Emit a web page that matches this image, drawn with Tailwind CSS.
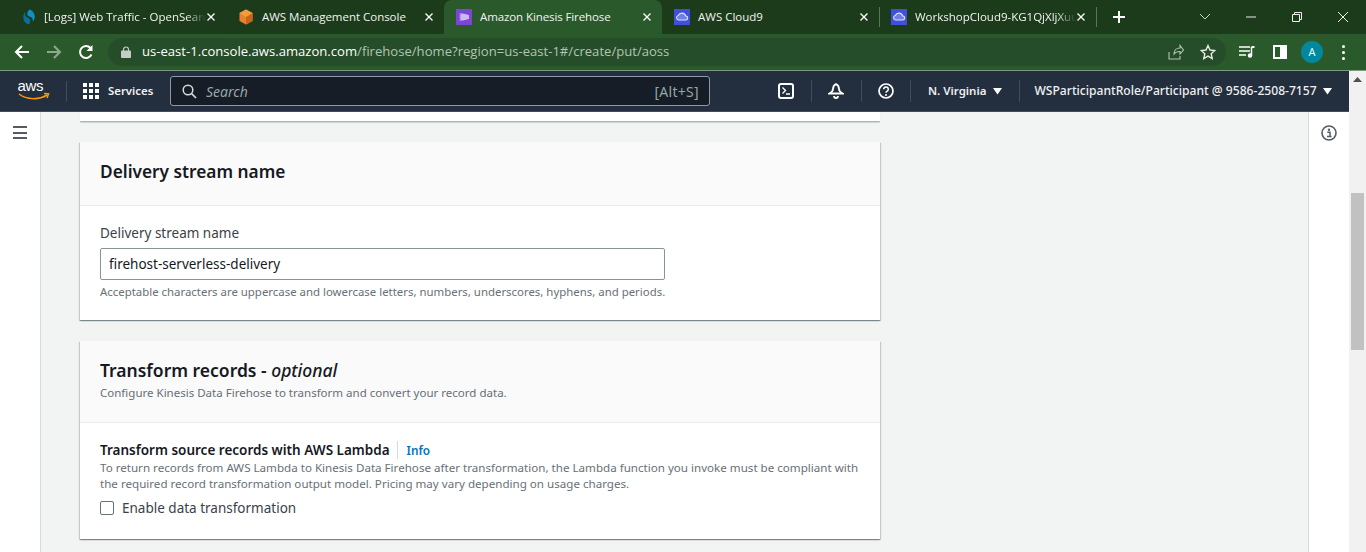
<!DOCTYPE html>
<html lang="en">
<head>
    <meta charset="UTF-8">
    <title>Amazon Kinesis Firehose</title>
    <script src="https://cdn.jsdelivr.net/npm/@tailwindcss/browser@4"></script>
</head>
<body class="h-[552px] w-[1366px] overflow-hidden bg-white font-['Open_Sans',sans-serif]">
    <!-- Tab strip -->
    <div class="flex h-[34px] items-center bg-[#1b3b1b] text-[11.5px] text-[#f1f3f1] font-['Open_Sans',sans-serif]">
        <div class="ml-[8px] flex h-[34px] w-[218px] items-center bg-[#1b3b1b] pl-[12px]">
            <svg class="mr-[8px] h-[16px] w-[16px] shrink-0" viewBox="0 0 16 16"><path d="M9.500.5a7.500 7.500 0 0 1 3 12.500C14 9.500 11 8 8.500 7 6.500 6 7 2.500 9.500.5z" fill="#0f8fc4"/><path d="M6 2.500C3.500 6 6 8 8.500 9c2 1 2.500 3.500.5 6.500A7.500 7.500 0 0 1 6 2.500z" fill="#0b6f9c"/></svg>
            <span class="w-[162px] overflow-hidden whitespace-nowrap [mask-image:linear-gradient(to_right,#000_88%,transparent)]">[Logs] Web Traffic - OpenSearch</span>
            <svg class="h-[10px] w-[10px]" viewBox="0 0 10 10"><path d="M1.500 1.500l7 7m0-7l-7 7" stroke="#fff" stroke-width="1.300"/></svg>
        </div>
        <div class="flex h-[34px] w-[218px] items-center rounded-b-lg bg-[#1b3b1b] pl-[12px]">
            <svg class="mr-[8px] h-[16px] w-[16px] shrink-0" viewBox="0 0 16 16"><path d="M8 .5l6.500 3.500v8L8 15.500 1.500 12V4z" fill="#e8832a"/><path d="M8 8v7.500L14.500 12V4z" fill="#c9641c"/><path d="M8 8L1.500 4 8 .5 14.500 4z" fill="#f19d3c"/></svg>
            <span class="w-[162px] whitespace-nowrap tracking-[-0.02px]">AWS Management Console</span>
            <svg class="h-[10px] w-[10px]" viewBox="0 0 10 10"><path d="M1.500 1.500l7 7m0-7l-7 7" stroke="#fff" stroke-width="1.300"/></svg>
        </div>
        <div class="flex h-[34px] w-[218px] items-center rounded-t-lg bg-[#2a5a2c] pl-[12px]">
            <svg class="mr-[8px] h-[16px] w-[16px] shrink-0" viewBox="0 0 16 16"><rect width="16" height="16" fill="#7b45d6"/><path d="M3 4.500h4l6 1.500v4l-6 1.500H3l2-1.500-2-1 2-1-2-1 2-1z" fill="#cdb8f2"/></svg>
            <span class="w-[162px] whitespace-nowrap tracking-[-0.1px]">Amazon Kinesis Firehose</span>
            <svg class="h-[10px] w-[10px]" viewBox="0 0 10 10"><path d="M1.500 1.500l7 7m0-7l-7 7" stroke="#fff" stroke-width="1.300"/></svg>
        </div>
        <div class="flex h-[34px] w-[218px] items-center pl-[12px]">
            <svg class="mr-[8px] h-[16px] w-[16px] shrink-0" viewBox="0 0 16 16"><rect width="16" height="16" fill="#3f51d9"/><path d="M4.500 11h7a2 2 0 0 0 .3-4A4 4 0 0 0 4.300 6.500 2.300 2.300 0 0 0 4.500 11z" fill="#6f7fe6" stroke="#dfe3fb" stroke-width="1.100"/></svg>
            <span class="w-[162px] whitespace-nowrap">AWS Cloud9</span>
            <svg class="h-[10px] w-[10px]" viewBox="0 0 10 10"><path d="M1.500 1.500l7 7m0-7l-7 7" stroke="#fff" stroke-width="1.300"/></svg>
            <span class="ml-[10px] h-[20px] w-px bg-[#5b755b]"></span>
        </div>
        <div class="flex h-[34px] w-[217px] items-center pl-[11px]">
            <svg class="mr-[8px] h-[16px] w-[16px] shrink-0" viewBox="0 0 16 16"><rect width="16" height="16" fill="#3f51d9"/><path d="M4.500 11h7a2 2 0 0 0 .3-4A4 4 0 0 0 4.300 6.500 2.300 2.300 0 0 0 4.500 11z" fill="#6f7fe6" stroke="#dfe3fb" stroke-width="1.100"/></svg>
            <span class="w-[161px] overflow-hidden whitespace-nowrap [mask-image:linear-gradient(to_right,#000_88%,transparent)]">WorkshopCloud9-KG1QjXljXuu</span>
            <svg class="h-[10px] w-[10px]" viewBox="0 0 10 10"><path d="M1.500 1.500l7 7m0-7l-7 7" stroke="#fff" stroke-width="1.300"/></svg>
            <span class="ml-[10px] h-[20px] w-px bg-[#5b755b]"></span>
        </div>
        <svg class="ml-[15px] h-[14px] w-[14px]" viewBox="0 0 14 14"><path d="M7 1v12M1 7h12" stroke="#fff" stroke-width="2"/></svg>
        <div class="ml-auto flex items-center">
            <svg class="h-[10px] w-[12px]" viewBox="0 0 12 10"><path d="M1 2l5 5 5-5" fill="none" stroke="#c9d4c9"/></svg>
            <svg class="ml-[34px] h-[10px] w-[12px]" viewBox="0 0 12 10"><path d="M1 5h10" stroke="#eee"/></svg>
            <svg class="ml-[34px] h-[12px] w-[12px]" viewBox="0 0 12 12"><path d="M1.500 3.500h7v7h-7zM3.500 3.500v-2h7v7h-2" fill="none" stroke="#eee"/></svg>
            <svg class="ml-[34px] mr-[17px] h-[12px] w-[12px]" viewBox="0 0 12 12"><path d="M1 1l10 10m0-10L1 11" stroke="#eee"/></svg>
        </div>
    </div>

    <!-- Address bar -->
    <div class="box-content flex h-[36px] items-center border-b border-[#7f9a80] bg-[#2a5a2c]">
        <svg class="ml-[14px] h-[16px] w-[16px]" viewBox="0 0 16 16"><path d="M15 8H2m6-6L2 8l6 6" fill="none" stroke="#fff" stroke-width="2"/></svg>
        <svg class="ml-[16px] h-[16px] w-[16px]" viewBox="0 0 16 16"><path d="M1 8h13M8 2l6 6-6 6" fill="none" stroke="#8fa890" stroke-width="2"/></svg>
        <svg class="ml-[16px] h-[16px] w-[16px]" viewBox="0 0 16 16"><path d="M13.500 10.500A6 6 0 1 1 12.500 4" fill="none" stroke="#fff" stroke-width="2"/><path d="M14.500 1v6h-6z" fill="#fff"/></svg>
        <div class="ml-[14px] flex h-[28px] w-[1118px] items-center rounded-full bg-[#264d2a] pl-[13px] text-[13.1px]">
            <svg class="h-[12px] w-[10px] shrink-0" viewBox="0 0 10 12"><path d="M2.500 5V3.500a2.500 2.500 0 0 1 5 0V5" fill="none" stroke="#c4cfc4" stroke-width="1.200"/><rect y="4.500" width="10" height="7.500" rx="1" fill="#c4cfc4"/></svg>
            <span class="ml-[11px] whitespace-nowrap text-white">us-east-1.console.aws.amazon.com<span class="text-[#b4c4b4]">/firehose/home?region=us-east-1#/create/put/aoss</span></span>
            <div class="ml-auto flex items-center">
                <svg class="h-[16px] w-[16px]" viewBox="0 0 16 16"><path d="M1 8v7h11v-3M6 10c0-4 3-6 6-6V1.500L15.500 6 12 10V7.500C9 7.500 7 8.500 6 10z" fill="none" stroke="#b4c4b4" stroke-width="1.100"/></svg>
                <svg class="ml-[16px] mr-[10px] h-[16px] w-[16px]" viewBox="0 0 16 16"><path d="M8 1.500l2 4.500 4.800.5-3.600 3.200 1 4.800L8 12.100l-4.200 2.400 1-4.800L1.200 6.500 6 6z" fill="none" stroke="#e6ece6" stroke-width="1.400"/></svg>
            </div>
        </div>
        <svg class="ml-[13px] h-[14px] w-[16px]" viewBox="0 0 16 14"><path d="M0 2h11M0 6h11M0 10h7" stroke="#fff" stroke-width="1.500"/><path d="M12.500 2v8" stroke="#fff" stroke-width="1.500"/><path d="M12.500 1h3v2h-3z" fill="#fff"/><circle cx="11" cy="10.500" r="2.200" fill="#fff"/></svg>
        <div class="ml-[18px] flex h-[14px] w-[14px] justify-end border-2 border-white"><span class="h-full w-[5px] bg-white"></span></div>
        <div class="ml-[14px] flex h-[22px] w-[22px] items-center justify-center rounded-full bg-[#00899c] text-[11px] text-white">A</div>
        <div class="ml-[19px] flex flex-col gap-[3px]"><span class="h-[3px] w-[3px] rounded-full bg-white"></span><span class="h-[3px] w-[3px] rounded-full bg-white"></span><span class="h-[3px] w-[3px] rounded-full bg-white"></span></div>
    </div>

    <!-- Page + scrollbar -->
    <div class="relative flex h-[481px] w-[1366px]">
        <div class="flex w-[1349px] flex-col font-['Noto_Sans',sans-serif]">
            <!-- AWS nav -->
            <div class="flex h-[41px] shrink-0 items-center border-b border-[#414d5c] bg-[#232f3e] text-[11.4px] font-medium text-[#eef0f2]">
                <div class="flex w-[67px] shrink-0 justify-center border-r border-[#414d5c]">
                    <div class="relative ml-[1px] h-[21px] w-[32px]">
                        <span class="absolute left-0 top-[-3px] text-[15px] leading-[16px] font-normal tracking-[-0.3px] text-white font-['Liberation_Sans',sans-serif]">aws</span>
                        <svg class="absolute left-0 top-[11px] h-[10px] w-[32px]" viewBox="0 0 32 10"><path d="M1 2c8 6 20 6 28 1" fill="none" stroke="#f90" stroke-width="1.500"/><path d="M26 1.500l4.500.5-1.500 4" fill="none" stroke="#f90" stroke-width="1.500"/></svg>
                    </div>
                </div>
                <div class="ml-[16px] grid h-[16px] w-[16px] grid-cols-3 gap-[2px]">
                    <span class="bg-white"></span><span class="bg-white"></span><span class="bg-white"></span>
                    <span class="bg-white"></span><span class="bg-white"></span><span class="bg-white"></span>
                    <span class="bg-white"></span><span class="bg-white"></span><span class="bg-white"></span>
                </div>
                <span class="ml-[9px] w-[62px] font-semibold">Services</span>
                <div class="flex h-[30px] w-[540px] items-center rounded-[3px] border border-[#8d99a8] bg-[#161d26] pl-[11px] pr-[10px] text-[14px] font-normal text-[#95a5a6]">
                    <svg class="h-[15px] w-[15px]" viewBox="0 0 15 15"><circle cx="6" cy="6" r="4.800" fill="none" stroke="#d5dbdb" stroke-width="1.500"/><path d="M9.500 9.500l4.500 4.500" stroke="#d5dbdb" stroke-width="1.700"/></svg>
                    <span class="ml-[9px] italic">Search</span>
                    <span class="ml-auto tracking-[0.3px]">[Alt+S]</span>
                </div>
                <div class="ml-[68px] flex h-[16px] w-[16px] items-center justify-center rounded-[3px] border-2 border-white">
                    <svg class="h-[10px] w-[10px]" viewBox="0 0 10 10"><path d="M1.500 1.500L4.500 4.500 1.500 7.500M5 8h4" fill="none" stroke="#fff" stroke-width="1.400"/></svg>
                </div>
                <span class="ml-[17px] h-[22px] w-px bg-[#414d5c]"></span>
                <svg class="ml-[16px] h-[18px] w-[16px]" viewBox="0 0 16 18"><path d="M8 2c-2 1-3 3-3 5s-1 3-3.500 4.500h13C12 10 11 9 11 7S10 3 8 2zM6 14a2 2 0 0 0 4 0" fill="none" stroke="#fff" stroke-width="1.800"/></svg>
                <span class="ml-[17px] h-[22px] w-px bg-[#414d5c]"></span>
                <svg class="ml-[16px] h-[16px] w-[16px]" viewBox="0 0 16 16"><circle cx="8" cy="8" r="7" fill="none" stroke="#fff" stroke-width="1.700"/><path d="M5.700 6.200a2.300 2.300 0 1 1 3.500 2c-.8.500-1.200 1-1.200 1.600" fill="none" stroke="#fff" stroke-width="1.500"/><circle cx="8" cy="12" r="1" fill="#fff"/></svg>
                <span class="ml-[16px] h-[22px] w-px bg-[#414d5c]"></span>
                <span class="ml-[17px] text-[11.500px] font-semibold">N. Virginia</span>
                <svg class="ml-[7px] h-[8px] w-[9px]" viewBox="0 0 9 8"><path d="M0 1h9L4.500 7.500z" fill="#fff"/></svg>
                <span class="ml-[17px] h-[22px] w-px bg-[#414d5c]"></span>
                <span class="ml-[14px] whitespace-nowrap text-[12.100px]">WSParticipantRole/Participant @ 9586-2508-7157</span>
                <svg class="ml-[6px] h-[8px] w-[9px]" viewBox="0 0 9 8"><path d="M0 1h9L4.500 7.500z" fill="#fff"/></svg>
            </div>

            <div class="flex min-h-0 flex-1">
                <!-- Left nav rail -->
                <div class="flex w-[41px] shrink-0 justify-center border-r border-[#d5dbdb] pt-[14px]">
                    <div class="flex h-[13px] w-[14px] flex-col justify-between">
                        <span class="h-[2px] bg-[#545b64]"></span><span class="h-[2px] bg-[#545b64]"></span><span class="h-[2px] bg-[#545b64]"></span>
                    </div>
                </div>

                <!-- Content -->
                <div class="min-w-0 flex-1 overflow-hidden bg-[#f2f3f3] pl-[39px]">
                    <div class="h-[10px] w-[800px] rounded-b-[1px] border-b border-[#aab7b8] bg-white shadow-[0_1px_1px_rgba(0,28,36,0.15)]"></div>

                    <section class="mt-[20px] w-[800px] bg-white shadow-[0_1px_1px_rgba(0,28,36,0.3),1px_1px_1px_rgba(0,28,36,0.15),-1px_1px_1px_rgba(0,28,36,0.15)]">
                        <div class="flex h-[64px] items-center border-b border-[#eaeded] bg-[#fafafa] px-[20px] pb-[4px]">
                            <h2 class="text-[17.300px] font-semibold text-[#16191f]">Delivery stream name</h2>
                        </div>
                        <div class="h-[114px] px-[20px] pt-[17px]">
                            <div class="text-[13.500px] leading-[20px] text-[#3b4149]">Delivery stream name</div>
                            <div class="mt-[5px] flex h-[32px] w-[565px] items-center rounded-[2px] border border-[#879596] bg-white px-[8px] text-[13.500px] text-[#16191f]">firehost-serverless-delivery</div>
                            <p class="mt-[3px] text-[11.420px] leading-[17px] text-[#687078]">Acceptable characters are uppercase and lowercase letters, numbers, underscores, hyphens, and periods.</p>
                        </div>
                    </section>

                    <section class="mt-[21px] w-[800px] bg-white shadow-[0_1px_1px_rgba(0,28,36,0.3),1px_1px_1px_rgba(0,28,36,0.15),-1px_1px_1px_rgba(0,28,36,0.15)]">
                        <div class="h-[82px] border-b border-[#eaeded] bg-[#fafafa] px-[20px] pt-[16px]">
                            <h2 class="text-[17.500px] leading-[26px] font-semibold text-[#16191f]">Transform records - <em class="font-medium italic">optional</em></h2>
                            <p class="mt-[1px] text-[11.530px] leading-[18px] text-[#687078]">Configure Kinesis Data Firehose to transform and convert your record data.</p>
                        </div>
                        <div class="h-[116px] px-[20px] pt-[18px]">
                            <div class="flex items-center text-[13.500px] leading-[18px] font-semibold text-[#16191f]">
                                <span>Transform source records with AWS Lambda</span>
                                <span class="ml-[7px] h-[18px] w-px bg-[#d5dbdb]"></span>
                                <span class="ml-[9px] text-[11.800px] text-[#0073bb]">Info</span>
                            </div>
                            <p class="mt-[1px] w-[765px] text-[11.600px] leading-[16px] text-[#687078]">To return records from AWS Lambda to Kinesis Data Firehose after transformation, the Lambda function you invoke must be compliant with the required record transformation output model. Pricing may vary depending on usage charges.</p>
                            <div class="mt-[6px] flex items-center text-[13.500px] leading-[20px] text-[#3b4149]">
                                <span class="h-[14px] w-[14px] rounded-[2px] border border-[#687078] bg-white"></span>
                                <span class="ml-[8px]">Enable data transformation</span>
                            </div>
                        </div>
                    </section>
                </div>

                <!-- Right rail -->
                <div class="flex w-[41px] shrink-0 justify-center border-l border-[#d5dbdb] pt-[13px]">
                    <svg class="h-[16px] w-[16px]" viewBox="0 0 16 16"><circle cx="8" cy="8" r="7" fill="none" stroke="#545b64" stroke-width="1.600"/><circle cx="8" cy="4.800" r="1.200" fill="#545b64"/><path d="M6.300 7.200H9v4M6 11.500h4.500" fill="none" stroke="#545b64" stroke-width="1.500"/></svg>
                </div>
            </div>
        </div>

        <!-- Scrollbar -->
        <div class="relative w-[17px] bg-[#f1f1f1]">
            <svg class="absolute left-[4px] top-[6px] h-[5px] w-[9px]" viewBox="0 0 9 5"><path d="M0 5L4.500 0 9 5z" fill="#505050"/></svg>
            <div class="absolute left-[2px] top-[122px] h-[157px] w-[13px] bg-[#c1c1c1]"></div>
        </div>
    </div>
</body>
</html>
